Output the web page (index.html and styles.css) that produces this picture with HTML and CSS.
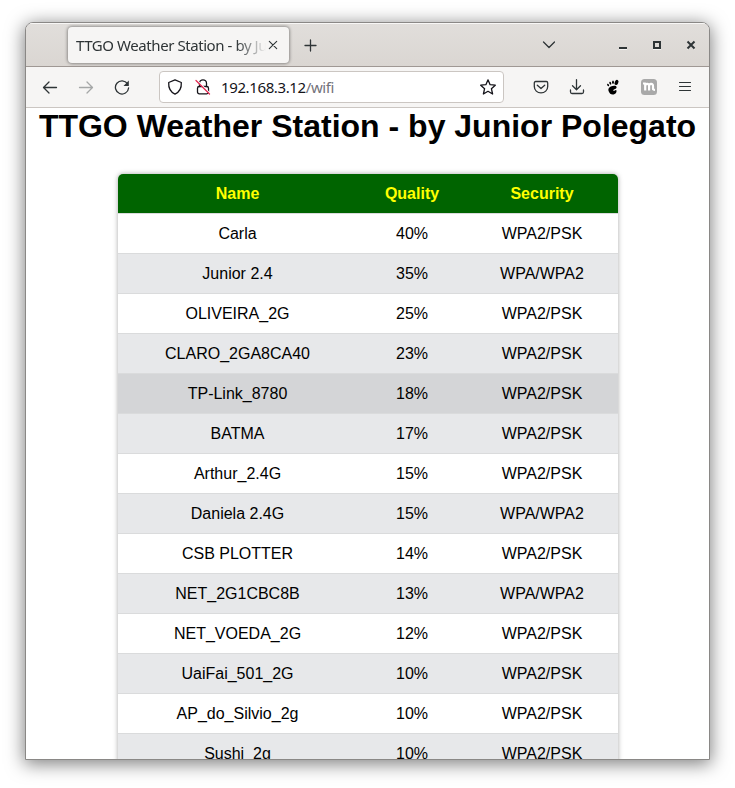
FILE: index.html
```html
<!DOCTYPE html>
<html lang="en">
<head>
<meta charset="utf-8">
<title>TTGO Weather Station - by Junior Polegato</title>
<link rel="stylesheet" href="styles.css">
</head>
<body>
<div class="window">
  <div class="titlebar">
    <div class="tab">
      <span class="tab-title">TTGO Weather Station - by Junior</span>
      <svg class="tab-close" width="10" height="10" viewBox="0 0 10 10"><path d="M1.300 1.300l7.400 7.400M8.700 1.300l-7.400 7.400"/></svg>
    </div>
    <svg class="new-tab" width="13" height="13" viewBox="0 0 13 13"><path d="M6.500 1v11M1 6.500h11"/></svg>
    <svg class="tab-list" width="14" height="14" viewBox="0 0 14 14"><path d="M1.500 4L7 9.500 12.500 4"/></svg>
    <div class="controls">
      <svg width="10" height="10" viewBox="0 0 10 10"><path class="glow" d="M1 9.500h8"/><path d="M1 8h8"/></svg>
      <svg width="10" height="10" viewBox="0 0 10 10"><path class="glow" d="M1 9.500h8"/><path d="M2 2h6v6h-6z"/></svg>
      <svg width="10" height="10" viewBox="0 0 10 10"><path class="glow" d="M1.500 2.500l7 7M8.500 2.500l-7 7"/><path d="M1.500 1.500l7 7M8.500 1.500l-7 7"/></svg>
    </div>
  </div>
  <div class="toolbar">
    <div class="icons">
      <svg viewBox="0 0 16 16"><path d="M14.500 8.500H1.800M7 3L1.500 8.500 7 14"/></svg>
      <svg class="disabled" viewBox="0 0 16 16"><path d="M1.500 8.500h12.700M9 3l5.500 5.500L9 14"/></svg>
      <svg viewBox="0 0 16 16"><path d="M13.500 4.700A6.600 6.600 0 1 0 14.600 9"/><path class="solid" d="M14.800 1.500v5.500H9.500z"/></svg>
    </div>
    <div class="urlbar">
      <svg class="shield" viewBox="0 0 16 16"><path d="M8 .8l6.300 2.700c.3 4.500-.9 9-6.300 11.700C2.600 12.500 1.400 8 1.700 3.500z"/></svg>
      <svg class="lock" viewBox="0 0 16 16"><rect x="2.500" y="7.500" width="11" height="7.300" rx="1.800"/><path d="M4.500 7.500V4.300a3.500 3.500 0 0 1 7 0v3.200"/><path class="slash-bg" d="M2.300 1.800l13 13"/><path class="slash" d="M1 1.500l13.500 13.500"/></svg>
      <span class="address">192.168.3.12<span class="path">/wifi</span></span>
      <svg class="star" viewBox="0 0 16 16"><path d="M8 .8l2.100 4.900 5.200.5-3.900 3.500 1.200 5.300L8 12.300 3.400 15l1.200-5.300L.7 6.200l5.200-.5z"/></svg>
    </div>
    <div class="icons">
      <svg viewBox="0 0 16 16"><path d="M2.700 2.500h10.600q1.400 0 1.400 1.400v3.700c0 3.700-3 6.300-6.700 6.300s-6.700-2.600-6.700-6.300V3.900q0-1.400 1.400-1.400z"/><path d="M4.300 6.300L8 9.600l3.700-3.300"/></svg>
      <svg viewBox="0 0 16 16"><path d="M7.500 .7v10M3.500 6.800l4 4 4-4M1.500 11v2q0 1.500 1.500 1.500h10q1.500 0 1.500-1.500v-2"/></svg>
      <svg class="foot" viewBox="0 0 16 16"><ellipse cx="11.500" cy="3.400" rx="1.800" ry="2.700" transform="rotate(25 11.500 3.400)"/><ellipse cx="8" cy="3.300" rx=".9" ry="1.700"/><ellipse cx="5.300" cy="4.200" rx=".9" ry="1.500" transform="rotate(-20 5.300 4.200)"/><ellipse cx="3.100" cy="6" rx=".8" ry="1.300" transform="rotate(-30 3.100 6)"/><path d="M3.500 9.800C4.500 7 11.300 5.600 11.600 8.200c.2 1.900-3 1.700-3.400 3.100-.2.900 1.200.5 2.200-.1 1.200-.5 1.500.8.800 2.200-1.300 2.400-4.300 2.600-6 1.300C4 13.400 2.900 11.400 3.500 9.800z"/></svg>
      <svg class="badge" viewBox="0 0 16 16"><rect width="16" height="16" rx="3.500"/><path d="M2 4.500h2.200v7M4.200 7c0-2.300 3.900-3.200 3.900 0v4.500M8.100 7c0-2.300 3.900-3.200 3.900 0v2.800q0 1 2 1"/></svg>
      <svg class="menu" viewBox="0 0 16 16"><path d="M2.500 3.500h11M2.500 7.500h11M2.500 11.500h11"/></svg>
    </div>
  </div>
  <main class="page">
    <h1>TTGO Weather Station - by Junior Polegato</h1>
    <table>
      <colgroup><col class="col-name"><col class="col-quality"><col class="col-security"></colgroup>
      <thead><tr><th>Name</th><th>Quality</th><th>Security</th></tr></thead>
      <tbody>
        <tr><td>Carla</td><td>40%</td><td>WPA2/PSK</td></tr>
        <tr><td>Junior 2.4</td><td>35%</td><td>WPA/WPA2</td></tr>
        <tr><td>OLIVEIRA_2G</td><td>25%</td><td>WPA2/PSK</td></tr>
        <tr><td>CLARO_2GA8CA40</td><td>23%</td><td>WPA2/PSK</td></tr>
        <tr class="hovered"><td>TP-Link_8780</td><td>18%</td><td>WPA2/PSK</td></tr>
        <tr><td>BATMA</td><td>17%</td><td>WPA2/PSK</td></tr>
        <tr><td>Arthur_2.4G</td><td>15%</td><td>WPA2/PSK</td></tr>
        <tr><td>Daniela 2.4G</td><td>15%</td><td>WPA/WPA2</td></tr>
        <tr><td>CSB PLOTTER</td><td>14%</td><td>WPA2/PSK</td></tr>
        <tr><td>NET_2G1CBC8B</td><td>13%</td><td>WPA/WPA2</td></tr>
        <tr><td>NET_VOEDA_2G</td><td>12%</td><td>WPA2/PSK</td></tr>
        <tr><td>UaiFai_501_2G</td><td>10%</td><td>WPA2/PSK</td></tr>
        <tr><td>AP_do_Silvio_2g</td><td>10%</td><td>WPA2/PSK</td></tr>
        <tr><td>Sushi_2g</td><td>10%</td><td>WPA2/PSK</td></tr>
      </tbody>
    </table>
  </main>
</div>
</body>
</html>
```
FILE: styles.css
```css
* { box-sizing: border-box; }
html, body { height: 100%; }
body {
  margin: 0;
  padding: 22px 25px 28px;
  background: #fff;
  overflow: hidden;
  font-family: "Noto Sans", sans-serif;
}
svg {
  display: block;
  flex: none;
  fill: none;
  stroke: #2e3436;
  stroke-width: 1.3;
  stroke-linecap: round;
  stroke-linejoin: round;
}
.window {
  height: 738px;
  display: flex;
  flex-direction: column;
  border: 1px solid #8a8886;
  border-radius: 8px 8px 0 0;
  background: #fff;
  overflow: hidden;
  box-shadow: 0 3px 18px 1px rgba(0, 0, 0, 0.5);
}
.titlebar {
  flex: none;
  height: 44px;
  display: flex;
  align-items: center;
  padding: 0 13px 0 42px;
  background: linear-gradient(#e1dedb, #dad6d2);
  border-bottom: 1px solid #9f9894;
  box-shadow: inset 0 1px #f8f7f6;
}
.tab {
  width: 221px;
  height: 36px;
  display: flex;
  align-items: center;
  justify-content: space-between;
  padding: 0 11px 0 8px;
  background: #f6f5f4;
  border-radius: 4px;
  box-shadow: 0 0 3px 1px rgba(0, 0, 0, 0.35);
}
.tab-title {
  width: 191px;
  overflow: hidden;
  white-space: nowrap;
  font-size: 15px;
  letter-spacing: -0.43px;
  line-height: 20px;
  color: #2e3436;
  mask-image: linear-gradient(to right, #000 160px, transparent 190px);
}
.tab-close { stroke-width: 1.1; }
.new-tab { margin: 1px 0 0 15px; }
.tab-list { margin-left: auto; }
.controls {
  display: flex;
  gap: 24px;
  margin-left: 62px;
}
.controls svg {
  stroke-width: 2;
  stroke-linecap: butt;
  stroke-linejoin: miter;
}
.controls .glow { stroke: #f5f4f2; stroke-width: 1; }
.toolbar {
  flex: none;
  height: 41px;
  display: flex;
  align-items: center;
  padding: 0 16px;
  background: #f6f5f4;
  border-bottom: 1px solid #cbc6c2;
}
.icons { display: flex; gap: 20px; }
.icons svg { width: 16px; height: 16px; }
.icons .disabled { opacity: 0.4; }
.icons .solid { fill: #2e3436; stroke: none; }
.icons .foot { fill: #000; stroke: none; }
.badge rect { fill: #a9a9a9; stroke: none; }
.badge path { stroke: #fff; stroke-width: 2.2; stroke-linecap: butt; }
.menu path { stroke-width: 1.2; }
.urlbar {
  width: 345px;
  height: 32px;
  display: flex;
  align-items: center;
  margin: 0 29px;
  padding: 0 7px;
  background: #fff;
  border: 1px solid #cbc6c2;
  border-radius: 4px;
}
.urlbar svg { width: 16px; height: 16px; stroke: #15141a; }
.lock { margin: 0 10px 0 12px; }
.urlbar .slash-bg { stroke: #fff; stroke-width: 1.500; }
.urlbar .slash { stroke: #e22850; }
.address {
  flex: 1;
  font-size: 15px;
  letter-spacing: -0.38px;
  line-height: 20px;
  color: #15141a;
}
.path { color: #73727a; }
.page {
  flex: 1;
  min-height: 0;
  overflow: hidden;
  font-family: "Liberation Sans", Arial, sans-serif;
  color: #000;
}
h1 {
  margin: 0 0 29px;
  font-size: 32px;
  line-height: 37px;
  text-align: center;
  white-space: nowrap;
}
table {
  width: 500px;
  margin: 0 auto 0 92px;
  table-layout: fixed;
  border-spacing: 0;
  border-radius: 5px 5px 0 0;
  overflow: hidden;
  box-shadow: 0 0 5px rgba(0, 0, 0, 0.35);
  font-size: 16px;
  line-height: 18px;
  text-align: center;
}
.col-name { width: 240px; }
.col-quality { width: 108px; }
th {
  height: 39px;
  padding: 0;
  background: #006400;
  color: #ff0;
}
td {
  height: 40px;
  padding: 0;
  border-top: 1px solid #dadbdc;
  background: #fff;
}
th:first-child, td:first-child { padding-right: 1px; }
tbody tr:nth-child(even) td { background: #e7e8ea; }
tbody tr.hovered td { background: #d4d5d7; }
```
